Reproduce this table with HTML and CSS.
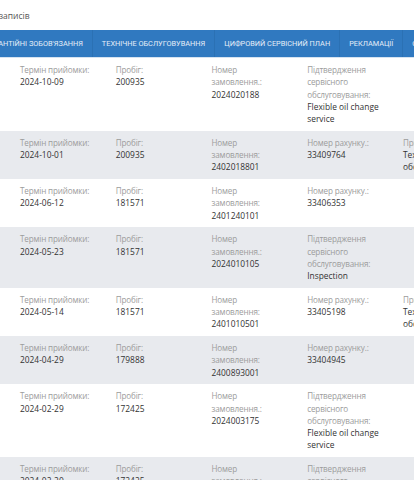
FILE: index.html
```html
<!DOCTYPE html>
<html lang="uk">
<head>
<meta charset="utf-8">
<link rel="stylesheet" href="styles.css">
</head>
<body>
<div class="page">
  <div class="count">записів</div>
  <nav class="tabs">
    <div class="tab">Гарантійні зобов'язання</div>
    <div class="tab active">Технічне обслуговування</div>
    <div class="tab">Цифровий сервісний план</div>
    <div class="tab">Рекламації</div>
    <div class="tab">Сервісні акції</div>
  </nav>
  <div class="list">
    <div class="row">
      <div class="cell"><span class="lbl">Термін прийомки:</span><span class="val">2024-10-09</span></div>
      <div class="cell"><span class="lbl">Пробіг:</span><span class="val">200935</span></div>
      <div class="cell"><span class="lbl">Номер<br>замовлення.:</span><span class="val">2024020188</span></div>
      <div class="cell"><span class="lbl">Підтвердження сервісного обслуговування:</span><span class="val">Flexible oil change service</span></div>
      <div class="cell"></div>
    </div>
    <div class="row alt">
      <div class="cell"><span class="lbl">Термін прийомки:</span><span class="val">2024-10-01</span></div>
      <div class="cell"><span class="lbl">Пробіг:</span><span class="val">200935</span></div>
      <div class="cell"><span class="lbl">Номер<br>замовлення:</span><span class="val">2402018801</span></div>
      <div class="cell"><span class="lbl">Номер рахунку.:</span><span class="val">33409764</span></div>
      <div class="cell"><span class="lbl">Причина:</span><span class="val">Технічне обслуговування</span></div>
    </div>
    <div class="row">
      <div class="cell"><span class="lbl">Термін прийомки:</span><span class="val">2024-06-12</span></div>
      <div class="cell"><span class="lbl">Пробіг:</span><span class="val">181571</span></div>
      <div class="cell"><span class="lbl">Номер<br>замовлення:</span><span class="val">2401240101</span></div>
      <div class="cell"><span class="lbl">Номер рахунку.:</span><span class="val">33406353</span></div>
      <div class="cell"></div>
    </div>
    <div class="row alt">
      <div class="cell"><span class="lbl">Термін прийомки:</span><span class="val">2024-05-23</span></div>
      <div class="cell"><span class="lbl">Пробіг:</span><span class="val">181571</span></div>
      <div class="cell"><span class="lbl">Номер<br>замовлення.:</span><span class="val">2024010105</span></div>
      <div class="cell"><span class="lbl">Підтвердження сервісного обслуговування:</span><span class="val">Inspection</span></div>
      <div class="cell"></div>
    </div>
    <div class="row">
      <div class="cell"><span class="lbl">Термін прийомки:</span><span class="val">2024-05-14</span></div>
      <div class="cell"><span class="lbl">Пробіг:</span><span class="val">181571</span></div>
      <div class="cell"><span class="lbl">Номер<br>замовлення:</span><span class="val">2401010501</span></div>
      <div class="cell"><span class="lbl">Номер рахунку.:</span><span class="val">33405198</span></div>
      <div class="cell"><span class="lbl">Причина:</span><span class="val">Технічне обслуговування</span></div>
    </div>
    <div class="row alt">
      <div class="cell"><span class="lbl">Термін прийомки:</span><span class="val">2024-04-29</span></div>
      <div class="cell"><span class="lbl">Пробіг:</span><span class="val">179888</span></div>
      <div class="cell"><span class="lbl">Номер<br>замовлення:</span><span class="val">2400893001</span></div>
      <div class="cell"><span class="lbl">Номер рахунку.:</span><span class="val">33404945</span></div>
      <div class="cell"></div>
    </div>
    <div class="row">
      <div class="cell"><span class="lbl">Термін прийомки:</span><span class="val">2024-02-29</span></div>
      <div class="cell"><span class="lbl">Пробіг:</span><span class="val">172425</span></div>
      <div class="cell"><span class="lbl">Номер<br>замовлення.:</span><span class="val">2024003175</span></div>
      <div class="cell"><span class="lbl">Підтвердження сервісного обслуговування:</span><span class="val">Flexible oil change service</span></div>
      <div class="cell"></div>
    </div>
    <div class="row alt">
      <div class="cell"><span class="lbl">Термін прийомки:</span><span class="val">2024-02-20</span></div>
      <div class="cell"><span class="lbl">Пробіг:</span><span class="val">172425</span></div>
      <div class="cell"><span class="lbl">Номер<br>замовлення.:</span><span class="val">2024003160</span></div>
      <div class="cell"><span class="lbl">Підтвердження сервісного обслуговування:</span><span class="val">Inspection</span></div>
      <div class="cell"></div>
    </div>
  </div>
</div>
</body>
</html>
```

FILE: styles.css
```css
html, body {
  margin: 0;
  padding: 0;
  background: #ffffff;
  overflow: hidden;
}

.page {
  width: 414px;
  overflow: hidden;
  font-family: "Open Sans", "Noto Sans", sans-serif;
}

.count {
  height: 30px;
  box-sizing: border-box;
  padding-top: 9px;
  font-size: 8.5px;
  line-height: 14px;
  color: #555555;
  margin-left: -1px;
}

.tabs {
  display: flex;
  height: 27px;
  background: #3079c0;
  border-bottom: 1px solid #d5e3f1;
  margin-left: -23px;
  width: max-content;
}

.tab {
  flex: none;
  padding: 0 9px;
  font-family: Roboto, "Noto Sans", sans-serif;
  font-size: 7.35px;
  line-height: 27px;
  text-transform: uppercase;
  color: #e6eef8;
  border-right: 1px solid #2b71b4;
}

.list {
  width: 480px;
}

.row {
  display: grid;
  grid-template-columns: repeat(5, 95.75px);
  padding: 6px 0 5.5px;
  background: #ffffff;
}

.row.alt {
  background: #e8eaee;
}

.cell {
  padding-left: 20px;
  font-size: 8.4px;
  line-height: 12.25px;
}

.lbl {
  display: block;
  color: #9c9c9c;
  font-size: 8.1px;
  letter-spacing: -0.15px;
}

.val {
  display: block;
  color: #333333;
  font-weight: 500;
}
```
